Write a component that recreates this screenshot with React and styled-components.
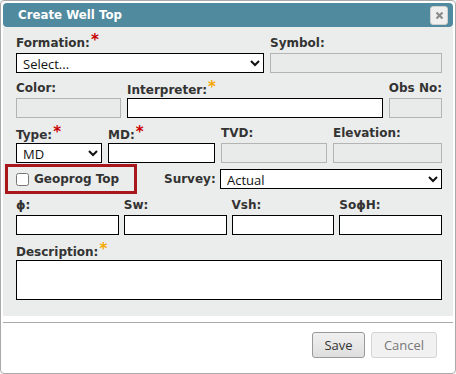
import React from 'react'
import styled, { createGlobalStyle } from 'styled-components'

const GlobalStyle = createGlobalStyle`
  html, body {
    margin: 0;
    padding: 0;
    background: #fff;
  }
  * {
    box-sizing: border-box;
  }
`

const Dialog = styled.div`
  width: 456px;
  height: 374px;
  border: 1px solid #aaa;
  border-radius: 4px;
  padding: 2px;
  display: flex;
  flex-direction: column;
  background: #fff;
  font-family: "DejaVu Sans", Verdana, sans-serif;
`

const TitleBar = styled.div`
  height: 24px;
  flex: none;
  background: #4f8a9e;
  border-radius: 4px;
  display: flex;
  align-items: center;
  justify-content: space-between;
  padding: 0 5px 0 15px;
`

const Title = styled.span`
  color: #fff;
  font-weight: bold;
  font-size: 11.8px;
`

const CloseButton = styled.button`
  width: 18px;
  height: 19px;
  padding: 0;
  border: 1px solid #d0d0d0;
  border-radius: 3px;
  background: #efefef;
  display: flex;
  align-items: center;
  justify-content: center;
`

const Body = styled.div`
  background: #ebedec;
  height: 289px;
  flex: none;
  padding: 6px 11px 16px 13px;
  display: flex;
  flex-direction: column;
`

const Row = styled.div`
  display: grid;
  grid-template-columns: ${p => p.$cols};
  column-gap: ${p => p.$gap || 6}px;
  margin-bottom: 5px;
`

const Field = styled.div`
  display: flex;
  flex-direction: column;
  min-width: 0;
`

const Label = styled.label`
  height: 20px;
  display: flex;
  align-items: flex-end;
  justify-content: ${p => (p.$right ? 'flex-end' : 'flex-start')};
  padding-bottom: ${p => (p.$low ? 1 : 3)}px;
  font-size: 12px;
  line-height: 14px;
  font-weight: bold;
  color: #333;
  white-space: nowrap;
`

const Star = styled.span`
  color: ${p => (p.$optional ? '#f5a900' : '#c80000')};
  font-size: 15px;
  font-weight: bold;
  line-height: 10px;
  align-self: flex-start;
  margin-top: ${p => (p.$low ? 4 : 2)}px;
  margin-left: 1px;
`

const Input = styled.input`
  height: 20px;
  width: 100%;
  border: 1px solid ${p => (p.disabled ? '#b4b4b4' : '#000')};
  background: ${p => (p.disabled ? '#e8ebea' : '#fff')};
  border-radius: 0;
  padding: 0 4px;
  font-family: "Open Sans", sans-serif;
  font-size: 13px;
  outline: none;
`

const Select = styled.select`
  height: 20px;
  width: 100%;
  border: 1px solid #000;
  border-radius: 0;
  background: #fff;
  padding: 0 2px;
  font-family: "Open Sans", sans-serif;
  font-size: 13px;
  color: #111;
  outline: none;
`

const OptionRow = styled.div`
  display: flex;
  align-items: center;
  height: 30px;
  margin: -4px 0 1px;
`

const GeoprogBox = styled.label`
  margin-left: -11px;
  width: 132px;
  height: 30px;
  border: 3px solid #a8171b;
  display: flex;
  align-items: center;
  padding-left: 8px;
  gap: 5px;
  font-size: 12px;
  font-weight: bold;
  color: #333;

  input {
    width: 13px;
    height: 13px;
    margin: 0;
  }
`

const SurveyLabel = styled.span`
  margin-left: 27px;
  width: 56px;
  font-size: 12px;
  font-weight: bold;
  color: #333;
`

const TextArea = styled.textarea`
  height: 40px;
  width: 100%;
  border: 1px solid #000;
  border-radius: 0;
  resize: none;
  outline: none;
`

const Footer = styled.div`
  margin-top: 6px;
  border-top: 1px solid #aaa;
  padding: 9px 16px 0 0;
  display: flex;
  justify-content: flex-end;
  gap: 6px;
`

const Button = styled.button`
  height: 26px;
  min-width: ${p => p.$width}px;
  padding: 0 10px;
  border: 1px solid ${p => (p.disabled ? '#d4d4d4' : '#999')};
  border-radius: 3px;
  background: ${p => (p.disabled ? '#f1f1f1' : 'linear-gradient(#f0f0f0, #dedede)')};
  color: ${p => (p.disabled ? '#777' : '#333')};
  font-family: "Open Sans", sans-serif;
  font-size: 13px;
`

const Req = ({ optional, low }) => <Star $optional={optional} $low={low}>*</Star>

export default function App() {
  return (
    <>
      <GlobalStyle />
      <Dialog>
        <TitleBar>
          <Title>Create Well Top</Title>
          <CloseButton aria-label="close">
            <svg width="9" height="9" viewBox="0 0 9 9">
              <path d="M1.5 1.5 L7.5 7.5 M7.5 1.5 L1.5 7.5" stroke="#8a8a8a" strokeWidth="2.2" />
            </svg>
          </CloseButton>
        </TitleBar>

        <Body>
          <Row $cols="248px 1fr">
            <Field>
              <Label>Formation:<Req /></Label>
              <Select defaultValue="">
                <option value="">Select...</option>
              </Select>
            </Field>
            <Field>
              <Label>Symbol:</Label>
              <Input disabled />
            </Field>
          </Row>

          <Row $cols="105px 1fr 53px">
            <Field>
              <Label>Color:</Label>
              <Input disabled />
            </Field>
            <Field>
              <Label $low>Interpreter:<Req optional low /></Label>
              <Input />
            </Field>
            <Field>
              <Label $right>Obs No:</Label>
              <Input disabled />
            </Field>
          </Row>

          <Row $cols="86px 107px 106px 1fr">
            <Field>
              <Label $low>Type:<Req low /></Label>
              <Select defaultValue="MD">
                <option>MD</option>
                <option>TVD</option>
              </Select>
            </Field>
            <Field>
              <Label $low>MD:<Req low /></Label>
              <Input />
            </Field>
            <Field>
              <Label>TVD:</Label>
              <Input disabled />
            </Field>
            <Field>
              <Label>Elevation:</Label>
              <Input disabled />
            </Field>
          </Row>

          <OptionRow>
            <GeoprogBox>
              <input type="checkbox" />
              Geoprog Top
            </GeoprogBox>
            <SurveyLabel>Survey:</SurveyLabel>
            <Select defaultValue="Actual" style={{ flex: 1 }}>
              <option>Actual</option>
            </Select>
          </OptionRow>

          <Row $cols="repeat(4, 1fr)" $gap={5}>
            <Field>
              <Label>ϕ:</Label>
              <Input />
            </Field>
            <Field>
              <Label>Sw:</Label>
              <Input />
            </Field>
            <Field>
              <Label>Vsh:</Label>
              <Input />
            </Field>
            <Field>
              <Label>SoϕH:</Label>
              <Input />
            </Field>
          </Row>

          <Field>
            <Label $low>Description:<Req optional low /></Label>
            <TextArea />
          </Field>
        </Body>

        <Footer>
          <Button $width={53}>Save</Button>
          <Button $width={66} disabled>Cancel</Button>
        </Footer>
      </Dialog>
    </>
  )
}
